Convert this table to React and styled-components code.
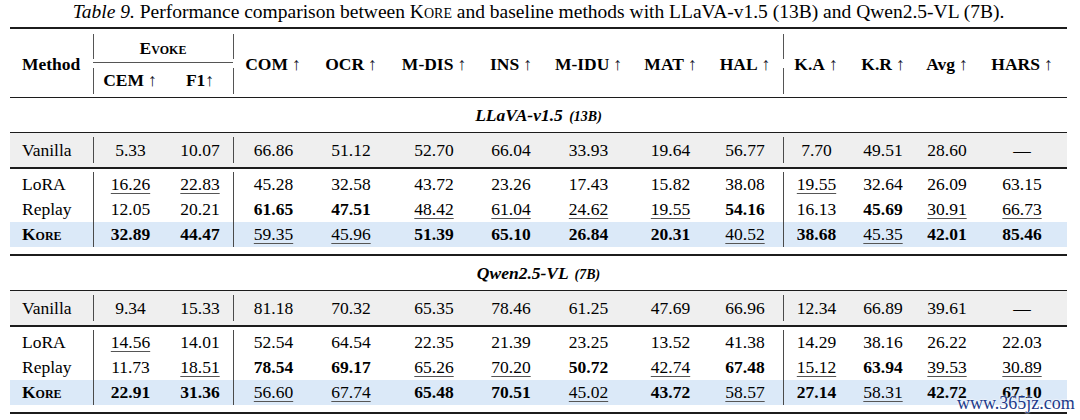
import styled, { createGlobalStyle } from 'styled-components';

const GlobalStyle = createGlobalStyle`
  body {
    margin: 0;
    background: #fff;
    color: #000;
    font-family: "Liberation Serif", "Times New Roman", serif;
  }
`;

// column widths, Method | CEM F1 | COM .. HAL | K.A K.R Avg HARS
const COLS = '83px 74px 66px 80px 76px 90px 64px 91px 73px 76px 66px 68px 60px 90px';

const Page = styled.div`
  position: relative;
  width: 1080px;
  height: 420px;
  overflow: hidden;
  padding: 0 13px 0 10px;
  box-sizing: border-box;
  font-family: "Liberation Serif", "Times New Roman", serif;
`;

const Caption = styled.div`
  text-align: center;
  font-size: 19.5px;
  line-height: 24px;
  margin-bottom: 3px;
  white-space: nowrap;
`;

const Em = styled.i`
  font-style: italic;
`;

const Caps = styled.span`
  font-variant: small-caps;
`;

const Rule = styled.div`
  height: ${p => p.$w || 1}px;
  background: #1c1c1c;
`;

const Header = styled.div`
  display: grid;
  grid-template-columns: ${COLS};
  grid-template-rows: 33px 1px 34px;
  font-size: 17.5px;
  font-weight: 700;
`;

const HeadCell = styled.div`
  grid-column: ${p => p.$col};
  grid-row: ${p => p.$row || '1 / 4'};
  display: flex;
  align-items: center;
  justify-content: ${p => (p.$left ? 'flex-start' : 'center')};
  padding: ${p => (p.$left ? '3px 0 0 12px' : p.$pad || '3px 0 0')};
  white-space: nowrap;
`;

const CMid = styled.div`
  grid-column: 2 / 4;
  grid-row: 2;
  background: #555;
`;

const HeadDivider = styled.div`
  grid-column: ${p => p.$col};
  grid-row: ${p => p.$row};
  justify-self: start;
  width: 1px;
  background: #555;
  margin: 5px 0 3px;
`;

const Arrow = styled.span`
  font-weight: 400;
  margin-left: ${p => (p.$tight ? '0' : '4px')};
  color: #18182a;
`;

const GroupLabel = styled.div`
  height: 34px;
  display: flex;
  align-items: center;
  justify-content: center;
  font-size: 17.5px;
  font-weight: 700;
  font-style: italic;
`;

const Paren = styled.span`
  font-size: 14px;
  margin-left: 2px;
`;

const BaseRow = styled.div`
  display: grid;
  grid-template-columns: ${COLS};
  height: 34px;
  padding: 4px 0;
  box-sizing: border-box;
  background: #efefef;
`;

const Group = styled.div`
  padding: 3px 0 7px;
`;

const Row = styled.div`
  display: grid;
  grid-template-columns: ${COLS};
  height: 25px;
  background: ${p => (p.$hl ? '#dbe9f8' : 'transparent')};
`;

const Cell = styled.div`
  display: flex;
  align-items: center;
  justify-content: ${p => (p.$left ? 'flex-start' : 'center')};
  padding-left: ${p => (p.$left ? '12px' : '0')};
  border-left: ${p => (p.$sep ? '1px solid #4a4a4a' : 'none')};
  font-size: 17.5px;
  font-weight: ${p => (p.$bold ? 700 : 400)};
  white-space: nowrap;
`;

const Under = styled.span`
  text-decoration: underline;
  text-decoration-thickness: 1px;
  text-decoration-color: #555;
  text-underline-offset: 3px;
`;

const Watermark = styled.div`
  position: absolute;
  left: 957px;
  top: 393px;
  font-family: "Liberation Serif", "Times New Roman", serif;
  font-size: 18px;
  color: #1d3a8a;
  text-shadow: 0 0 2px #fff, 0 0 2px #fff;
  white-space: nowrap;
`;

const SEPS = [1, 3, 10];

const HEADS = ['COM', 'OCR', 'M-DIS', 'INS', 'M-IDU', 'MAT', 'HAL', 'K.A', 'K.R', 'Avg', 'HARS'];

const sections = [
  {
    name: 'LLaVA-v1.5',
    size: '(13B)',
    vanilla: ['5.33', '10.07', '66.86', '51.12', '52.70', '66.04', '33.93', '19.64', '56.77', '7.70', '49.51', '28.60', '—'],
    rows: [
      ['LoRA', ['_16.26', '_22.83', '45.28', '32.58', '43.72', '23.26', '17.43', '15.82', '38.08', '_19.55', '32.64', '26.09', '63.15']],
      ['Replay', ['12.05', '20.21', '*61.65', '*47.51', '_48.42', '_61.04', '_24.62', '_19.55', '*54.16', '16.13', '*45.69', '_30.91', '_66.73']],
      ['Kore', ['*32.89', '*44.47', '_59.35', '_45.96', '*51.39', '*65.10', '*26.84', '*20.31', '_40.52', '*38.68', '_45.35', '*42.01', '*85.46']],
    ],
  },
  {
    name: 'Qwen2.5-VL',
    size: '(7B)',
    vanilla: ['9.34', '15.33', '81.18', '70.32', '65.35', '78.46', '61.25', '47.69', '66.96', '12.34', '66.89', '39.61', '—'],
    rows: [
      ['LoRA', ['_14.56', '14.01', '52.54', '64.54', '22.35', '21.39', '23.25', '13.52', '41.38', '14.29', '38.16', '26.22', '22.03']],
      ['Replay', ['11.73', '_18.51', '*78.54', '*69.17', '_65.26', '_70.20', '*50.72', '_42.74', '*67.48', '_15.12', '*63.94', '_39.53', '_30.89']],
      ['Kore', ['*22.91', '*31.36', '_56.60', '_67.74', '*65.48', '*70.51', '_45.02', '*43.72', '_58.57', '*27.14', '_58.31', '*42.72', '*67.10']],
    ],
  },
];

// "*" = best (bold), "_" = second best (underline)
const Value = ({ v, i }) => {
  const bold = v[0] === '*';
  const under = v[0] === '_';
  const text = bold || under ? v.slice(1) : v;
  return (
    <Cell $bold={bold} $sep={SEPS.includes(i + 1)}>
      {under ? <Under>{text}</Under> : text}
    </Cell>
  );
};

const Section = ({ data }) => (
  <>
    <GroupLabel>
      <span>
        {data.name} <Paren>{data.size}</Paren>
      </span>
    </GroupLabel>
    <Rule />
    <BaseRow>
      <Cell $left>Vanilla</Cell>
      {data.vanilla.map((v, i) => <Value key={i} v={v} i={i} />)}
    </BaseRow>
    <Rule $w={2} />
    <Group>
      {data.rows.map(([method, vals]) => (
        <Row key={method} $hl={method === 'Kore'}>
          {method === 'Kore' ? (
            <Cell $left $bold><Caps>Kore</Caps></Cell>
          ) : (
            <Cell $left>{method}</Cell>
          )}
          {vals.map((v, i) => <Value key={i} v={v} i={i} />)}
        </Row>
      ))}
    </Group>
    <Rule $w={2} />
  </>
);

export default function App() {
  return (
    <Page>
      <GlobalStyle />
      <Caption>
        <Em>Table 9.</Em> Performance comparison between <Caps>Kore</Caps> and baseline methods with
        LLaVA-v1.5 (13B) and Qwen2.5-VL (7B).
      </Caption>
      <Rule $w={2} />
      <Header>
        <HeadCell $col={1} $left>Method</HeadCell>
        <HeadCell $col="2 / 4" $row={1} $pad="5px 0 0"><Caps>Evoke</Caps></HeadCell>
        <CMid />
        <HeadCell $col={2} $row={3} $pad="0">CEM<Arrow>↑</Arrow></HeadCell>
        <HeadCell $col={3} $row={3} $pad="0">F1<Arrow $tight>↑</Arrow></HeadCell>
        {HEADS.map((h, i) => (
          <HeadCell key={h} $col={i + 4}>{h}<Arrow>↑</Arrow></HeadCell>
        ))}
        {[2, 4, 11].map(c => (
          <HeadDivider key={`a${c}`} $col={c} $row={1} />
        ))}
        {[2, 4, 11].map(c => (
          <HeadDivider key={`b${c}`} $col={c} $row={3} />
        ))}
      </Header>
      <Rule />
      {sections.map(s => <Section key={s.name} data={s} />)}
      <Watermark>www.365jz.com</Watermark>
    </Page>
  );
}
